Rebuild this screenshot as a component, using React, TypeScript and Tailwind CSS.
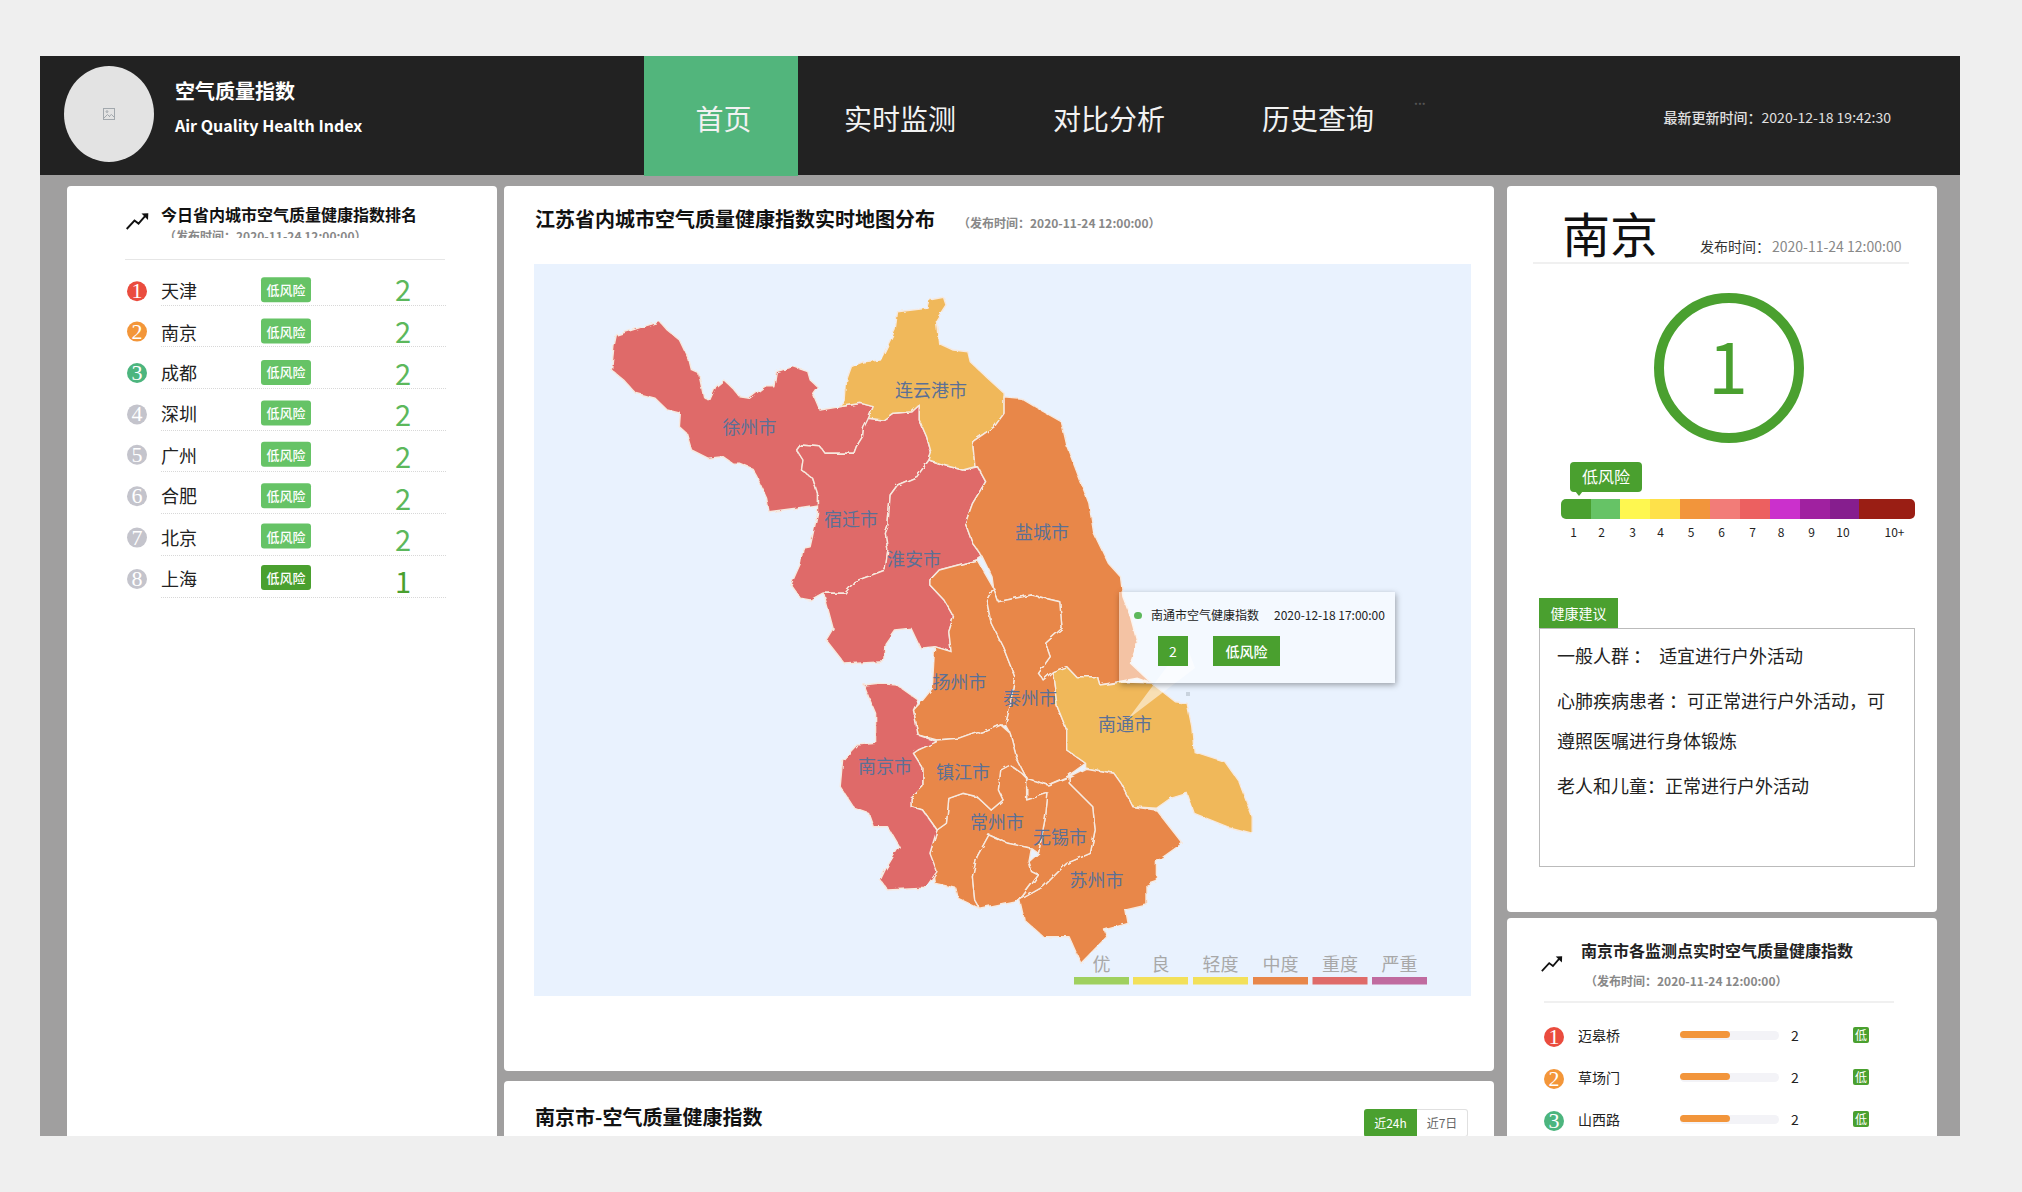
import React from "react";

const font = { fontFamily: '"Noto Sans CJK SC", "Noto Sans", sans-serif' };

const a = (s: string) =>
  s.trim().split(/\s+/).map((p) => {
    const [x, y] = p.split(",").map(Number);
    return `${(500 + x / 2.063).toFixed(1)},${(180 + y / 3).toFixed(1)}`;
  }).join(" ");
const b = (s: string) =>
  s.trim().split(/\s+/).map((p) => {
    const [x, y] = p.split(",").map(Number);
    return `${(760 + x / 2.119).toFixed(1)},${(560 + y / 3).toFixed(1)}`;
  }).join(" ");

const RED = "#df6b69";
const ORANGE = "#e8874a";
const YELLOW = "#f0b85a";

const regions: { fill: string; pts: string }[] = [
  { fill: RED, pts: a("240,465 295,440 330,425 345,450 370,480 390,540 395,570 410,580 420,650 432,662 445,620 462,600 480,625 495,650 515,655 545,620 565,620 570,575 605,560 635,575 640,600 655,620 645,640 660,690 700,680 745,670 770,680 760,720 750,745 748,770 735,800 730,820 670,820 660,800 620,795 612,810 625,840 622,870 645,895 655,940 655,975 610,985 555,995 550,955 530,890 520,865 495,850 480,850 460,830 430,835 395,810 385,760 370,740 372,700 345,690 320,655 280,640 255,600 230,570 235,500") },
  { fill: RED, pts: a("760,715 790,720 810,700 850,695 865,675 865,720 880,770 890,820 885,840 860,890 820,915 805,945 800,1040 795,1060 800,1110 795,1170 730,1205 715,1240 665,1240 640,1260 620,1255 600,1215 620,1150 625,1105 640,1100 655,1000 655,940 645,895 622,870 625,840 612,810 620,795 660,800 670,820 730,820 735,800 748,770 750,745") },
  { fill: RED, pts: a("885,840 915,855 955,870 985,860 1002,905 975,970 960,1030 975,1090 995,1130") + " " + b("460,0 380,30 360,60 360,75 390,120 410,170 400,215 405,275 370,260 340,265 320,205 285,210 265,250 262,305 180,312 140,240 155,205 135,100 180,100 200,65 265,30") + " " + a("800,1110 795,1060 800,1040 805,945 820,915 860,890") },
  { fill: YELLOW, pts: a("820,395 880,385 885,360 915,352 920,375 900,420 905,490 935,510 965,515 970,545 1010,600 1040,640 1040,700 1020,740 975,785 980,860 955,870 915,855 885,840 890,820 880,770 865,720 865,675 850,695 810,700 790,720 760,715 770,680 745,670 700,680 712,665 715,600 725,560 750,545 785,540 795,510 815,450") },
  { fill: ORANGE, pts: a("1040,650 1075,655 1115,690 1158,725 1170,800 1215,970 1225,1060 1255,1150 1280,1190 1285,1250") + " " + b("785,170 800,250 785,310 830,370 800,355 720,375 715,350 670,350 650,320 620,335 600,360 590,340 615,290 605,250 640,205 635,125 575,105 505,125 495,85") + " " + a("1015,1190 995,1130 975,1090 960,1030 975,970 1002,905 985,860 980,860 975,785 1020,740 1040,700") },
  { fill: ORANGE, pts: b("380,30 460,0 495,85 480,120 490,190 515,260 540,350 530,440 520,495 510,495 470,520 460,515 420,535 375,540 335,525 325,450 345,420 365,385 370,260 405,275 400,215 410,170 390,120 360,75 360,60") },
  { fill: ORANGE, pts: b("495,85 505,125 575,105 635,125 640,205 605,250 615,290 590,340 600,360 620,335 630,440 650,510 650,570 690,610 650,650 610,675 565,655 545,600 530,520 520,495 530,440 540,350 515,260 490,190 480,120") },
  { fill: YELLOW, pts: b("620,335 650,320 670,350 715,350 720,375 770,365 830,370 880,425 905,430 915,500 920,575 985,605 1015,665 1043,770 1043,820 990,800 920,760 905,700 870,715 840,745 790,740 765,670 750,640 690,625 690,610 650,570 650,510 630,440") },
  { fill: ORANGE, pts: b("690,625 750,640 765,670 790,740 840,750 895,850 840,905 840,965 820,975 820,1035 775,1050 780,1090 730,1110 735,1130 680,1210 655,1130 600,1130 560,1080 550,1020 600,980 650,910 700,880 710,810 705,740 655,670 655,650") },
  { fill: ORANGE, pts: b("565,655 610,675 655,650 655,670 705,740 710,810 700,880 650,910 600,980 550,1020 590,945 575,935 570,905 590,880 605,770 610,700 565,720") },
  { fill: ORANGE, pts: b("510,630 530,615 555,640 565,655 565,720 610,700 605,770 590,880 575,865 525,850 485,825 460,890 450,950 455,1020 465,1045 420,1015 415,985 370,970 360,880 375,810 395,790 400,715 430,700 460,710 490,750 515,720 505,690") },
  { fill: ORANGE, pts: b("485,825 525,850 575,865 570,905 575,935 590,945 550,1020 465,1045 455,1020 450,950 460,890") },
  { fill: ORANGE, pts: b("335,570 375,540 420,535 460,515 470,520 510,495 530,520 545,600 565,655 555,640 530,615 510,630 505,690 515,720 490,750 460,710 430,700 400,715 395,790 375,810 345,750 320,740 320,715 345,680 345,625 325,580") },
  { fill: RED, pts: b("220,375 250,370 290,375 335,420 325,450 335,525 375,545 335,570 325,580 345,625 345,680 320,715 320,740 345,750 375,810 360,880 375,935 350,985 270,990 255,960 265,930 295,860 270,800 240,800 230,760 200,745 170,680 175,600 205,555 245,550 245,460 230,410") },
];

const mapLabels: [string, number, number][] = [
  ["徐州市", 749.6, 427],
  ["连云港市", 931, 390.7],
  ["宿迁市", 851, 519],
  ["盐城市", 1042, 532],
  ["淮安市", 914, 559],
  ["扬州市", 959.6, 682],
  ["泰州市", 1030, 698],
  ["南通市", 1125, 724],
  ["南京市", 885, 766],
  ["镇江市", 963, 772],
  ["常州市", 997, 822],
  ["无锡市", 1060, 837],
  ["苏州市", 1096.5, 880],
];

const legend: [string, number, string][] = [
  ["优", 1074, "#9fd05f"],
  ["良", 1133, "#f2e05a"],
  ["轻度", 1193, "#f2e05a"],
  ["中度", 1253, "#e8874a"],
  ["重度", 1312.5, "#df6b69"],
  ["严重", 1372, "#c06b9f"],
];

function Trend({ className }: { className: string }) {
  return (
    <svg viewBox="0 0 23 17" className={className} fill="none">
      <path d="M0.7 16 L8.5 7.6 L12.5 10.6 L19.5 2.6" stroke="#111" strokeWidth="1.9" />
      <path d="M15.5 0.6 L22.3 0.2 L22 7 Z" fill="#111" />
    </svg>
  );
}

const rankColors = ["bg-[#ea4c3e]", "bg-[#f39639]", "bg-[#4cb57e]", "bg-[#c4c4cc]", "bg-[#c4c4cc]", "bg-[#c4c4cc]", "bg-[#c4c4cc]", "bg-[#c4c4cc]"];

function Rank({ n }: { n: number }) {
  return (
    <div
      className={`flex h-[20px] w-[20px] items-center justify-center rounded-full text-[22px] leading-none text-white ${rankColors[n - 1]}`}
      style={{ fontFamily: '"Liberation Serif", serif' }}
    >
      {n}
    </div>
  );
}

const cities: [string, number][] = [
  ["天津", 2],
  ["南京", 2],
  ["成都", 2],
  ["深圳", 2],
  ["广州", 2],
  ["合肥", 2],
  ["北京", 2],
  ["上海", 1],
];

const scale: [string, string][] = [
  ["w-[30px]", "bg-[#4aa02f]"],
  ["w-[29px]", "bg-[#66c366]"],
  ["w-[30px]", "bg-[#fef750]"],
  ["w-[30px]", "bg-[#fee14a]"],
  ["w-[30px]", "bg-[#f2953b]"],
  ["w-[30px]", "bg-[#f27c78]"],
  ["w-[30px]", "bg-[#ec6060]"],
  ["w-[30px]", "bg-[#cb30cc]"],
  ["w-[30px]", "bg-[#a021a0]"],
  ["w-[29px]", "bg-[#861e8e]"],
  ["w-[56px]", "bg-[#9a1e14]"],
];

const scaleLabels: [string, string][] = [
  ["1", "w-[25px]"],
  ["2", "w-[31px]"],
  ["3", "w-[31px]"],
  ["4", "w-[25px]"],
  ["5", "w-[36px]"],
  ["6", "w-[25px]"],
  ["7", "w-[37px]"],
  ["8", "w-[20px]"],
  ["9", "w-[41px]"],
  ["10", "w-[22px]"],
  ["10+", "w-[81px]"],
];

const stations = ["迈皋桥", "草场门", "山西路"];

export default function App() {
  return (
    <div className="h-[1192px] w-[2022px] overflow-hidden bg-[#efefef] pl-[40px] pt-[56px]" style={font}>
      <div className="h-[1080px] w-[1920px] overflow-hidden bg-[#a09f9f]">
        {/* header */}
        <header className="flex h-[119px] bg-[#222222]">
          <div className="flex w-[604px] items-center pl-[24px]">
            <div className="mb-[3px] flex h-[96px] w-[90px] items-center justify-center rounded-[50%] bg-[#e3e3e3]">
              <svg viewBox="0 0 12 12" className="h-[12px] w-[12px]" fill="none" stroke="#a2a8ad" strokeWidth="1">
                <rect x="0.5" y="0.5" width="11" height="11" />
                <path d="M1 10 L4.5 6.5 L7 9 M6.5 8 L8.5 6.5 L11 9" />
                <circle cx="4" cy="3.6" r="0.9" />
              </svg>
            </div>
            <div className="mb-[18px] ml-[21px] text-white">
              <div className="text-[20px] font-bold leading-[30px]">空气质量指数</div>
              <div className="mt-[7px] text-[16px] font-bold leading-[24px]">Air Quality Health Index</div>
            </div>
          </div>
          <nav className="flex text-[28px] text-[#f2f2f2]">
            <div className="flex h-[120px] w-[154px] items-center justify-center bg-[#52b57c] pl-[5px] pt-[3px]">首页</div>
            <div className="flex h-[120px] items-center whitespace-nowrap pl-[46px] pr-[49px] pt-[3px]">实时监测</div>
            <div className="flex h-[120px] items-center whitespace-nowrap pl-[48px] pr-[48px] pt-[3px]">对比分析</div>
            <div className="flex h-[120px] items-center whitespace-nowrap pl-[49px] pr-[48px] pt-[3px]">历史查询</div>
          </nav>
          <div className="ml-[-8px] mt-[34px] text-[12px] font-bold leading-[20px] text-[#555]">...</div>
          <div className="ml-auto flex items-center whitespace-nowrap pr-[69px] pt-[4px] text-[14px] text-[#e0e0e0]">
            <span className="font-medium">最新更新时间：</span>
            <span>2020-12-18 19:42:30</span>
          </div>
        </header>

        {/* content */}
        <div className="mt-[11px] flex pl-[27px]">
          {/* left */}
          <section className="h-[960px] w-[430px] rounded-[4px] bg-white pl-[58px] pt-[16px]">
            <div className="flex h-[36px] overflow-hidden">
              <Trend className="ml-[1px] mt-[11px] h-[17px] w-[23px] shrink-0" />
              <div className="ml-[12px]">
                <div className="whitespace-nowrap text-[16px] font-bold leading-[24px] text-[#111]">今日省内城市空气质量健康指数排名</div>
                <div className="ml-[3px] whitespace-nowrap text-[12px] font-bold leading-[20px] text-[#888]">（发布时间：2020-11-24 12:00:00）</div>
              </div>
            </div>
            <div className="mt-[21px] h-px w-[320px] bg-[#e6e6e6]" />
            <div className="mt-[4px] w-[321px]">
              {cities.map(([c, v], i) => {
                const lift = { transform: `translateY(${(-(i - 2) * 0.6).toFixed(1)}px)` };
                return (
                  <div key={c} className="flex h-[41.7px]">
                    <div className="flex w-[36px] items-end pb-[6px] pl-[2px]" style={lift}>
                      <Rank n={i + 1} />
                    </div>
                    <div className="flex flex-1 items-center border-b border-dotted border-[#d8d8d8] pt-[9px]">
                      <div className="w-[100px] text-[18px] leading-none text-[#222]" style={lift}>{c}</div>
                      <div style={lift} className={`flex h-[25px] w-[50px] items-center justify-center rounded-[3px] text-[13px] font-medium text-white ${v === 1 ? "bg-[#4aa02f]" : "bg-[#66c366]"}`}>
                        低风险
                      </div>
                      <div className={`ml-[84px] text-[29px] leading-none ${v === 1 ? "text-[#4aa02f]" : "text-[#5cb85c]"}`}>{v}</div>
                    </div>
                  </div>
                );
              })}
            </div>
          </section>

          {/* middle */}
          <div className="ml-[7px] w-[990px]">
            <section className="h-[885px] rounded-[4px] bg-white pl-[30px] pr-[23px]">
              <div className="flex h-[78px] items-start pl-[1px] pt-[18px]">
                <div className="text-[20px] font-bold leading-[30px] text-[#111]">江苏省内城市空气质量健康指数实时地图分布</div>
                <div className="ml-[23px] mt-[9px] text-[12px] font-bold leading-[20px] text-[#888]">（发布时间：2020-11-24 12:00:00）</div>
              </div>
              <div className="relative h-[732px] w-[937px] bg-[#e9f2fe]">
                <svg viewBox="534 264 937 732" className="h-[732px] w-[937px]">
                  <defs>
                    <filter id="rough" x="-5%" y="-5%" width="110%" height="110%">
                      <feTurbulence type="fractalNoise" baseFrequency="0.12" numOctaves="2" seed="4" />
                      <feDisplacementMap in="SourceGraphic" scale="4" />
                    </filter>
                  </defs>
                  <g filter="url(#rough)">
                    {regions.map((r, i) => (
                      <polygon key={i} points={r.pts} fill={r.fill} stroke="#f6e9df" strokeWidth="1.4" strokeLinejoin="round" />
                    ))}
                  </g>
                  {mapLabels.map(([t, x, y]) => (
                    <text key={t} x={x} y={y + 6.5} textAnchor="middle" fontSize="18" fill="#5b7096">
                      {t}
                    </text>
                  ))}
                  {legend.map(([t, x, c]) => (
                    <g key={t}>
                      <text x={x + 27.5} y={971} textAnchor="middle" fontSize="18" fill="#a8a8a8">
                        {t}
                      </text>
                      <rect x={x} y={977} width="55" height="7.5" fill={c} />
                    </g>
                  ))}
                  <polygon points="1128,719 1195,668 1186,644 1172,660" fill="#ffffff" fillOpacity="0.55" />
                  <rect x="1186" y="692" width="4" height="4" fill="#c9d3de" />
                </svg>
                <div className="absolute left-[585px] top-[328px] h-[91px] w-[276px] bg-white/50 shadow-[1px_2px_6px_rgba(0,0,0,0.35)]">
                  <div className="flex items-center whitespace-nowrap pt-[13px] text-[12px] leading-[20px] text-[#222]">
                    <span className="ml-[15px] h-[7px] w-[8px] rounded-full bg-[#5cb85c]" />
                    <span className="ml-[9px] w-[121px]">南通市空气健康指数</span>
                    <span className="ml-[2px]">2020-12-18 17:00:00</span>
                  </div>
                  <div className="ml-[39px] mt-[11px] flex">
                    <div className="flex h-[30px] w-[30px] items-center justify-center bg-[#4aa02f] text-[14px] text-white">2</div>
                    <div className="ml-[25px] flex h-[30px] w-[67px] items-center justify-center bg-[#4aa02f] text-[14px] font-medium text-white">低风险</div>
                  </div>
                </div>
              </div>
            </section>
            <section className="mt-[10px] flex h-[100px] items-start rounded-[4px] bg-white pl-[31px] pr-[26px]">
              <div className="mt-[21px] text-[20px] font-bold leading-[30px] text-[#111]">南京市-空气质量健康指数</div>
              <div className="ml-auto mt-[28px] flex h-[28px] text-[12px]">
                <div className="flex w-[53px] items-center justify-center rounded-l-[3px] bg-[#4aa02f] text-white">近24h</div>
                <div className="flex w-[51px] items-center justify-center rounded-r-[3px] border border-l-0 border-[#e0e0e0] text-[#666]">近7日</div>
              </div>
            </section>
          </div>

          {/* right */}
          <div className="ml-[13px] w-[430px]">
            <section className="h-[726px] rounded-[4px] bg-white">
              <div className="ml-[26px] flex h-[78px] w-[376px] items-end border-b-2 border-[#f0f0f0]">
                <div className="mb-[-5px] ml-[29px] text-[48px] leading-[70px] text-[#111]">南京</div>
                <div className="mb-[6px] ml-[42px] whitespace-nowrap text-[14px] leading-[20px] text-[#333]">
                  发布时间：
                  <span className="ml-[2px] text-[#888]">2020-11-24 12:00:00</span>
                </div>
              </div>
              <div className="ml-[147px] mt-[29px] flex h-[150px] w-[150px] items-center justify-center rounded-full border-[10px] border-[#4aa02f] pb-[10px] pr-[2px] text-[72px] leading-none text-[#4aa02f]">
                1
              </div>
              <div className="relative ml-[63px] mt-[19px] h-[30px] w-[72px] rounded-[4px] bg-[#4aa02f] text-center text-[16px] leading-[29px] text-white">
                低风险
                <span className="absolute left-[5px] top-[29px] h-0 w-0 border-x-[4px] border-t-[5px] border-x-transparent border-t-[#4aa02f]" />
              </div>
              <div className="ml-[54px] mt-[7px] flex h-[20px] w-[354px] overflow-hidden rounded-[5px]">
                {scale.map(([w, c]) => (
                  <div key={c} className={`h-full ${w} ${c}`} />
                ))}
              </div>
              <div className="ml-[54px] mt-[3px] flex text-[12px] leading-[20px] text-[#222]">
                {scaleLabels.map(([t, w]) => (
                  <div key={t} className={`text-center ${w}`}>
                    {t}
                  </div>
                ))}
              </div>
              <div className="ml-[32px] mt-[56px] flex h-[30px] w-[79px] items-center justify-center bg-[#4aa02f] text-[14px] text-white">健康建议</div>
              <div className="ml-[32px] h-[239px] w-[376px] border border-[#bbbbbb] pl-[17px] pr-[20px] pt-[6px] text-[18px] leading-[40px] text-[#222]">
                <p>一般人群 ：{"\u00a0\u00a0"}适宜进行户外活动</p>
                <p className="mt-[5px]">心肺疾病患者 ：可正常进行户外活动，可遵照医嘱进行身体锻炼</p>
                <p className="mt-[5px]">老人和儿童：正常进行户外活动</p>
              </div>
            </section>
            <section className="mt-[6px] h-[300px] rounded-[4px] bg-white">
              <div className="relative ml-[37px] h-[85px] w-[350px] border-b-2 border-[#f0f0f0]">
                <Trend className="absolute left-[-3px] top-[38px] h-[16px] w-[22px]" />
                <div className="absolute left-[37px] top-[20px] whitespace-nowrap text-[16px] font-bold leading-[24px] text-[#222]">南京市各监测点实时空气质量健康指数</div>
                <div className="absolute left-[41px] top-[53px] whitespace-nowrap text-[12px] font-bold leading-[20px] text-[#888]">（发布时间：2020-11-24 12:00:00）</div>
              </div>
              <div className="ml-[37px] mt-[11px]">
                {stations.map((s, i) => (
                  <div key={s} className="flex h-[42px] items-center">
                    <div className="pt-[3px]">
                      <Rank n={i + 1} />
                    </div>
                    <div className="ml-[14px] w-[102px] text-[14px] leading-none text-[#222]">{s}</div>
                    <div className="h-[9px] w-[99px] rounded-full bg-[#f3f3f7]">
                      <div className="h-[7px] w-[50px] rounded-full bg-[#f2953b]" />
                    </div>
                    <div className="ml-[12px] w-[62px] text-[14px] leading-none text-[#222]">2</div>
                    <div className="flex h-[16px] w-[16px] items-center justify-center rounded-[2px] bg-[#4aa02f] text-[12px] leading-none text-white">低</div>
                  </div>
                ))}
              </div>
            </section>
          </div>
        </div>
      </div>
    </div>
  );
}
